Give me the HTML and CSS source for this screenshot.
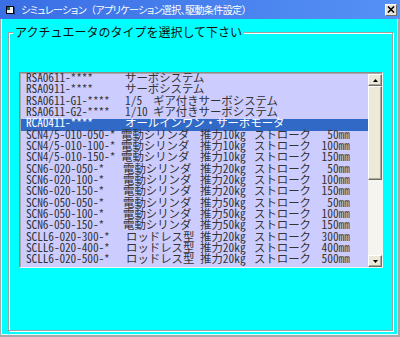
FILE: index.html
```html
<!DOCTYPE html>
<html lang="ja">
<head>
<meta charset="utf-8">
<title>シミュレーション</title>
<link rel="stylesheet" href="styles.css">
</head>
<body>
<div class="window">
  <div class="titlebar">
    <svg class="app-icon" width="10" height="10" viewBox="0 0 10 10">
      <rect x="1.5" y="1.5" width="7" height="7" fill="#f0f0f0" stroke="#000" stroke-width="1"/>
      <rect x="2" y="2" width="3" height="3" fill="#0a6b5a"/>
      <rect x="5" y="5" width="3" height="3" fill="#ffffff"/>
      <rect x="9" y="2" width="1" height="8" fill="#1b3f8f"/>
    </svg>
    <span class="title">シミュレーション<span class="paren">（</span>アプリケーション選択、駆動条件設定<span class="paren">）</span></span>
    <div class="close">
      <svg width="8" height="7" viewBox="0 0 8 7"><path d="M1 0.5 L7 6.5 M7 0.5 L1 6.5" stroke="#000" stroke-width="1.6" fill="none"/></svg>
    </div>
  </div>
  <div class="client">
    <fieldset class="group">
      <legend>アクチュエータのタイプを選択して下さい</legend>
      <div class="listbox">
        <div class="rows">
          <div class="row"><span class="m code">RSA0611-****</span><span class="desc">サーボシステム</span></div>
          <div class="row"><span class="m code">RSA0911-****</span><span class="desc">サーボシステム</span></div>
          <div class="row"><span class="m code">RSA0611-G1-****</span><span class="desc"><span class="m ratio">1/5</span>ギア付きサーボシステム</span></div>
          <div class="row"><span class="m code">RSA0611-G2-****</span><span class="desc"><span class="m ratio">1/10</span>ギア付きサーボシステム</span></div>
          <div class="row sel"><span class="m code">RCA0411-****</span><span class="desc">オールインワン・サーボモータ</span></div>
          <div class="row"><span class="m code">SCN4/5-010-050-*</span><span class="type">電動シリンダ</span><span class="force">推力<span class="m">10kg</span></span><span class="stroke">ストローク</span><span class="val"><span class="m">50</span>㎜</span></div>
          <div class="row"><span class="m code">SCN4/5-010-100-*</span><span class="type">電動シリンダ</span><span class="force">推力<span class="m">10kg</span></span><span class="stroke">ストローク</span><span class="val"><span class="m">100</span>㎜</span></div>
          <div class="row"><span class="m code">SCN4/5-010-150-*</span><span class="type">電動シリンダ</span><span class="force">推力<span class="m">10kg</span></span><span class="stroke">ストローク</span><span class="val"><span class="m">150</span>㎜</span></div>
          <div class="row"><span class="m code">SCN6-020-050-*</span><span class="type i2">電動シリンダ</span><span class="force">推力<span class="m">20kg</span></span><span class="stroke">ストローク</span><span class="val"><span class="m">50</span>㎜</span></div>
          <div class="row"><span class="m code">SCN6-020-100-*</span><span class="type i2">電動シリンダ</span><span class="force">推力<span class="m">20kg</span></span><span class="stroke">ストローク</span><span class="val"><span class="m">100</span>㎜</span></div>
          <div class="row"><span class="m code">SCN6-020-150-*</span><span class="type i2">電動シリンダ</span><span class="force">推力<span class="m">20kg</span></span><span class="stroke">ストローク</span><span class="val"><span class="m">150</span>㎜</span></div>
          <div class="row"><span class="m code">SCN6-050-050-*</span><span class="type i2">電動シリンダ</span><span class="force">推力<span class="m">50kg</span></span><span class="stroke">ストローク</span><span class="val"><span class="m">50</span>㎜</span></div>
          <div class="row"><span class="m code">SCN6-050-100-*</span><span class="type i2">電動シリンダ</span><span class="force">推力<span class="m">50kg</span></span><span class="stroke">ストローク</span><span class="val"><span class="m">100</span>㎜</span></div>
          <div class="row"><span class="m code">SCN6-050-150-*</span><span class="type i2">電動シリンダ</span><span class="force">推力<span class="m">50kg</span></span><span class="stroke">ストローク</span><span class="val"><span class="m">150</span>㎜</span></div>
          <div class="row"><span class="m code">SCLL6-020-300-*</span><span class="type i5">ロッドレス型</span><span class="force">推力<span class="m">20kg</span></span><span class="stroke">ストローク</span><span class="val"><span class="m">300</span>㎜</span></div>
          <div class="row"><span class="m code">SCLL6-020-400-*</span><span class="type i5">ロッドレス型</span><span class="force">推力<span class="m">20kg</span></span><span class="stroke">ストローク</span><span class="val"><span class="m">400</span>㎜</span></div>
          <div class="row"><span class="m code">SCLL6-020-500-*</span><span class="type i5">ロッドレス型</span><span class="force">推力<span class="m">20kg</span></span><span class="stroke">ストローク</span><span class="val"><span class="m">500</span>㎜</span></div>
        </div>
        <div class="scrollbar">
          <div class="sb-btn"><svg width="5" height="3" viewBox="0 0 5 3"><path d="M2.5 0 L5 3 L0 3 Z" fill="#000"/></svg></div>
          <div class="sb-thumb"></div>
          <div class="sb-track"></div>
          <div class="sb-btn"><svg width="5" height="3" viewBox="0 0 5 3"><path d="M0 0 L5 0 L2.5 3 Z" fill="#000"/></svg></div>
        </div>
      </div>
    </fieldset>
  </div>
</div>
</body>
</html>
```

FILE: styles.css
```css
* { box-sizing: border-box; }
html, body { margin: 0; padding: 0; }
body {
  width: 400px;
  height: 337px;
  overflow: hidden;
  background: #00ffff;
  font-family: "Noto Sans CJK JP", sans-serif;
}
.window {
  width: 400px;
  height: 337px;
  display: flex;
  flex-direction: column;
}
.titlebar {
  height: 19px;
  flex: none;
  display: flex;
  align-items: center;
  padding: 0 3px 0 5px;
  background: linear-gradient(to right, #3a6ee4, #5591f5);
}
.app-icon { display: block; flex: none; }
.title {
  margin-left: 6px;
  color: #fff;
  font-size: 10px;
  line-height: 19px;
  letter-spacing: -0.6px;
  font-feature-settings: "palt";
  white-space: nowrap;
}
.title .paren { font-feature-settings: normal; }
.close {
  margin-left: auto;
  width: 12px;
  height: 12px;
  background: #e6e3da;
  border: 1px solid;
  border-color: #fff #6d6d6d #6d6d6d #fff;
  display: flex;
  align-items: center;
  justify-content: center;
}
.close svg { display: block; }
.client {
  flex: 1;
  display: flex;
  flex-direction: column;
  background: #00ffff;
  border-style: solid;
  border-color: #a8a8a8;
  border-width: 0 2px 2px 1px;
  box-shadow: inset 1px 0 #dffcfc, inset -1px -1px #dffcfc;
}
.group {
  flex: 1;
  margin: 6px 5px 4px 7px;
  padding: 0;
  border: 1px solid #a0a0a0;
  box-shadow: inset 1px 1px #ffffff, 1px 1px #ffffff;
  min-width: 0;
}
.group legend {
  margin-left: 4px;
  padding: 0 2px;
  font-size: 12px;
  line-height: 14px;
  color: #111;
  background: #00ffff;
}
.listbox {
  margin: 33px 0 0 10px;
  width: 364px;
  height: 196px;
  display: flex;
  border: 1px solid;
  border-color: #8a8a8a #f4f4f4 #f4f4f4 #8a8a8a;
  box-shadow: inset 1px 1px #a9a9a9;
  padding: 1px 0 0 1px;
}
.rows {
  flex: 1;
  background: #ccccff;
}
.row {
  display: flex;
  align-items: baseline;
  height: 11.33px;
  line-height: 7px;
  padding-left: 5px;
  font-size: 11.4px;
  color: #333;
  white-space: nowrap;
}
.row.sel { background: #3169c6; color: #fff; }
.m { font-feature-settings: "hwid"; }
.code { width: 95px; flex: none; letter-spacing: -0.12px; }
.desc { padding-left: 4px; }
.ratio { display: inline-block; width: 28px; }
.type { width: 79px; flex: none; }
.type.i2 { padding-left: 2px; }
.type.i5 { padding-left: 5px; }
.force { width: 54px; flex: none; }
.stroke { width: 66px; flex: none; }
.val { width: 30px; flex: none; text-align: right; }
.scrollbar {
  width: 14px;
  flex: none;
  display: flex;
  flex-direction: column;
  background: #f5f4ef;
}
.sb-btn, .sb-thumb {
  background: #ece9d8;
  border: 1px solid;
  border-color: #fff #716f64 #716f64 #fff;
  box-shadow: inset -1px -1px #aca899;
}
.sb-btn {
  height: 12px;
  flex: none;
  display: flex;
  align-items: center;
  justify-content: center;
}
.sb-btn svg { display: block; }
.sb-thumb { height: 94px; flex: none; }
.sb-track { flex: 1; }
```
